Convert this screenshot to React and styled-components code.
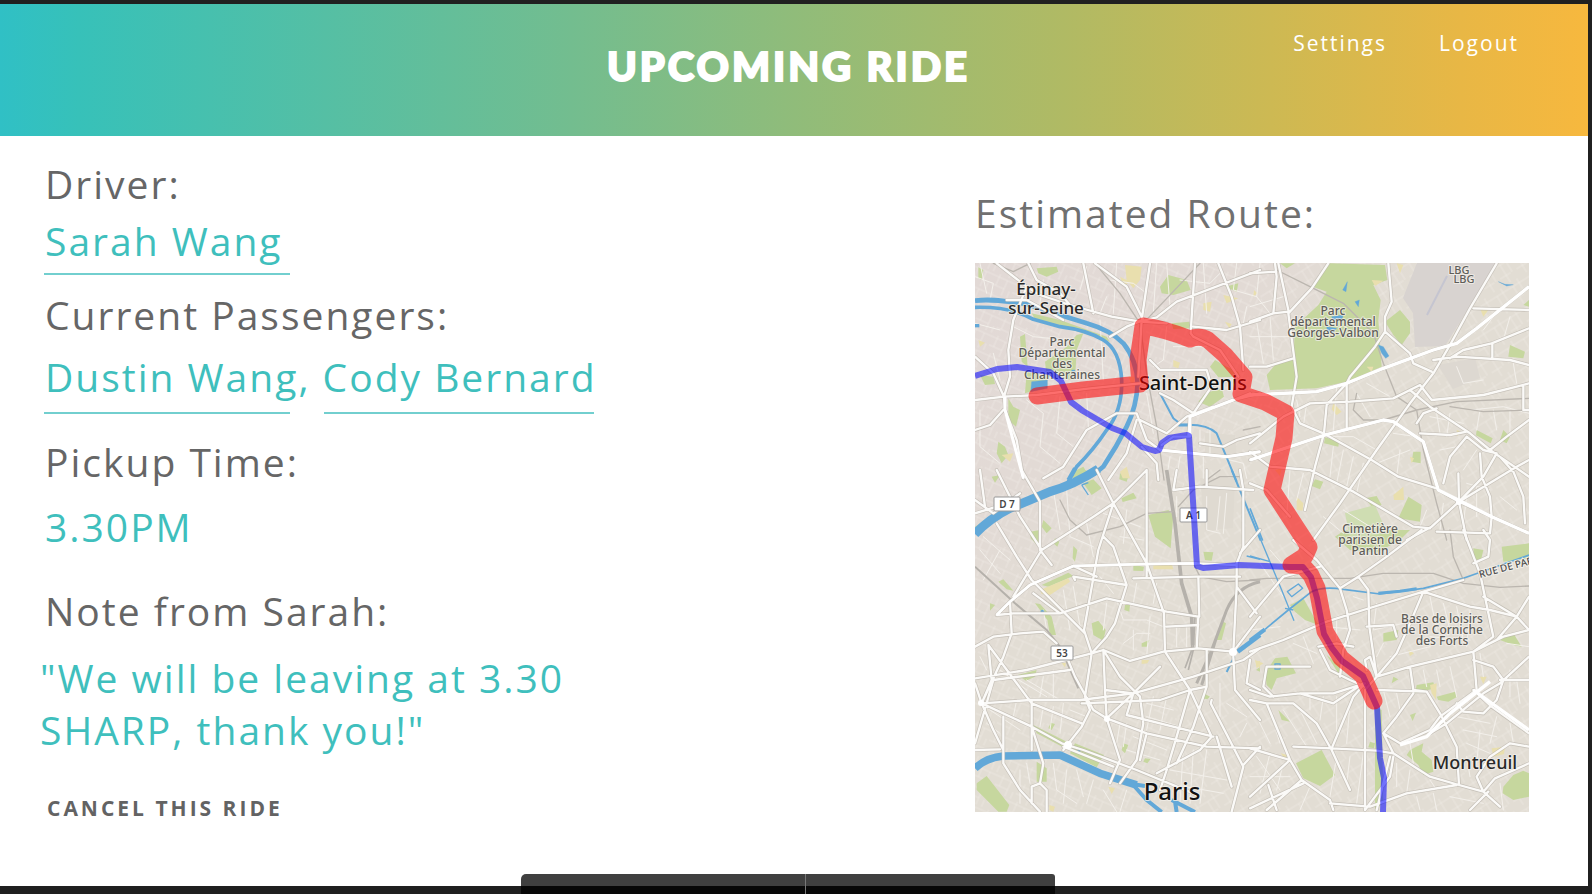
import React from "react";
import styled, { createGlobalStyle } from "styled-components";

const GlobalStyle = createGlobalStyle`
  *, *::before, *::after { box-sizing: border-box; }
  body { margin: 0; background: #222; font-family: "Open Sans", "Noto Sans", sans-serif; }
  h1, h2, p, blockquote { margin: 0; font-weight: 400; }
`;

const Frame = styled.div`
  position: relative;
  display: flex;
  flex-direction: column;
  min-height: 100vh;
  padding: 4px 4px 8px 0;
  background: #202020;
`;

const Header = styled.header`
  display: grid;
  grid-template-columns: 1fr auto 1fr;
  min-height: 132px;
  padding: 0 69px 0 58px;
  background: linear-gradient(
    90deg,
    #30c0c5 0%,
    #37c1b9 5%,
    #73bd8f 36%,
    #90bc7a 50%,
    #b0ba64 67%,
    #cdb953 80%,
    #e8b745 92%,
    #f7b83e 100%
  );
  color: #fff;
`;

const Title = styled.h1`
  grid-column: 2;
  align-self: center;
  padding-bottom: 8px;
  font: 900 40px/48px Lato, "Open Sans", sans-serif;
  letter-spacing: 3px;
  -webkit-text-stroke: 2px #fff;
  stroke-linejoin: round;
`;

const Nav = styled.nav`
  display: flex;
  justify-content: flex-end;
  gap: 52px;
  padding-top: 24px;
`;

const NavLink = styled.a`
  color: #fff;
  font-size: 21px;
  line-height: 30px;
  letter-spacing: 2px;
  text-decoration: none;
`;

const Main = styled.main`
  flex: 1;
  display: flex;
  justify-content: space-between;
  align-items: flex-start;
  padding: 22px 59px 32px 40px;
  background: #fff;
`;

const Details = styled.div`
  display: flex;
  flex-direction: column;
  align-items: flex-start;
  max-width: 600px;
`;

const Field = styled.section`
  display: flex;
  flex-direction: column;
  gap: ${(p) => p.$gap}px;
  margin-bottom: ${(p) => p.$after}px;
  padding-left: 5px;
`;

const Label = styled.h2`
  color: ${(p) => p.$color || "#666"};
  font-size: 39px;
  line-height: 52px;
  letter-spacing: 2px;
`;

const Value = styled.p`
  color: #3fbfbd;
  font-size: 39px;
  line-height: 52px;
  letter-spacing: 2px;
`;

const NameLink = styled.a`
  position: relative;
  color: inherit;
  text-decoration: none;

  &::after {
    content: "";
    position: absolute;
    left: ${(p) => p.$start || 0}px;
    right: ${(p) => p.$end || 0}px;
    bottom: ${(p) => -p.$drop}px;
    height: 2px;
    background: #72cfcf;
  }
`;

const Quote = styled.blockquote`
  margin-left: -5px;
  color: #3fbfbd;
  font-size: 39px;
  line-height: 52px;
  letter-spacing: 2px;
`;

const CancelButton = styled.button`
  padding: 0 0 0 7px;
  border: 0;
  background: none;
  color: #636363;
  font: 700 21px/30px "Open Sans", sans-serif;
  letter-spacing: 3px;
  cursor: pointer;
`;

const Route = styled.section`
  display: flex;
  flex-direction: column;
  gap: 24px;
  width: 35vw;
  max-width: 554px;
  padding-top: 29px;
`;

const MapImage = styled.svg`
  display: block;
  width: 100%;
  height: auto;
  font-family: "Noto Sans", "Open Sans", sans-serif;
`;

const Dock = styled.div`
  position: absolute;
  bottom: 0;
  left: 50%;
  display: grid;
  grid-template-columns: 285px 249px;
  height: 20px;
  margin-left: -275px;
  border-radius: 5px 3px 0 0;
  background: rgba(0, 0, 0, 0.75);
`;

const DockPane = styled.div`
  border-right: ${(p) => (p.$divided ? "1px solid #777" : "0")};
`;

/* The map is drawn in four sheets, each at three times the map's scale. */
const SHEETS = {
  nw: "translate(-15 -83) scale(0.33333)",
  ne: "translate(275 -13) scale(0.33333)",
  sw: "translate(-15 207) scale(0.33333)",
  se: "translate(275 267) scale(0.33333)",
};

const PARKS = {
  nw: "M230 265L290 260L295 275L260 290L235 280Z M215 400L300 420L440 470L450 485L380 462L300 440L225 418Z M350 465L370 460L350 510L345 600L260 590L255 545L320 500Z M200 575L262 590L262 620L195 640Z M180 470L195 462L203 560L185 545Z M600 320L625 285L680 300L692 330L640 345L605 340Z M635 430L688 425L692 445L640 447Z M750 560L765 540L800 560L835 575L840 590L775 592Z M735 640L785 625L792 650L750 680L715 665Z M145 655L160 680L180 690L168 740L145 720Z M60 585L100 590L105 612L75 615Z M115 785L135 800L145 825L125 850L110 820Z M330 880L370 860L385 885L350 900Z M55 262L70 270L65 300L55 295Z M795 320L835 310L830 335Z",
  ne: "M240 40L405 45L412 90L370 105L392 150L385 210L395 350L290 395L200 415L60 420L50 375L75 345L130 325L135 230L205 165L230 125L188 110Z M405 215L450 180L480 215L480 250L455 285L430 255Z M475 740L515 765L510 815L445 805Z M490 605L512 605L512 640L485 635Z M345 745L380 738L395 765L365 770Z M780 285L825 305L820 325L775 320Z M680 540L728 565L722 580L678 556Z M225 562L267 575L265 590L222 580Z M760 540L780 560L770 580L750 570Z M90 40L135 40L110 55Z M820 165L837 150L837 170Z M195 688L220 695L210 718L185 708Z",
  sw: "M565 135L625 120L640 135L632 235L585 200Z M370 40L400 28L425 55L395 75Z M480 10L505 20L500 35L478 28Z M484 85L520 68L530 85L488 96Z M210 185L240 180L240 235L212 205Z M250 150L275 175L260 190L245 170Z M285 205L298 215L292 230L280 220Z M340 228L352 240L345 275L338 265Z M330 20L375 0L390 5L350 28Z M730 245L760 247L755 272L735 270Z M520 285L552 290L550 303L520 302Z M245 345L325 308L340 318L265 350Z M115 335L130 328L160 362L140 358Z M225 400L240 402L275 440L288 495L270 495L262 450Z M395 460L415 452L437 480L430 512L400 495Z M173 615L230 600L225 620L198 632Z M495 405L510 405L508 425L493 420Z M545 520L568 510L560 530L545 530Z M790 455L798 460L785 510L768 510Z M735 672L750 680L742 688L725 684Z M220 765L320 815L315 835L230 790Z M272 758L285 762L275 780L265 775Z M345 820L432 855L410 892L330 850Z M230 875L260 895L260 935L230 935Z M50 940L80 918L148 1005L140 1025L115 1025L50 960Z M490 820L505 825L495 850L485 840Z M555 865L572 867L562 880L550 875Z M90 400L105 405L90 422Z M95 20L120 15L105 38Z M45 170L90 140L100 148L50 180Z M900 590L900 605L888 600Z",
  se: "M120 225L160 205L205 285L165 270L135 245Z M285 0L480 0L450 30L380 68L300 60L255 20Z M755 50L837 40L837 85L760 95Z M670 55L700 60L692 95L672 85Z M45 430L75 385L112 380L138 430L80 445L65 480L50 465Z M138 700L215 660L255 735L210 768L160 745Z M480 660L520 640L515 665L545 690L550 725L520 735L505 705L470 675Z M760 770L790 735L820 722L837 730L837 800L790 810L758 790Z M560 500L615 485L622 500L595 515L565 510Z M375 530L395 540L400 820L375 838Z M750 330L790 310L815 350L790 345Z M400 310L445 300L440 330L400 335Z M500 465L550 457L555 475L495 490Z M85 540L120 575L95 570Z M230 375L275 410L265 430Z M430 440L445 448L425 460Z M480 555L498 548L488 573Z M360 635L375 640L372 655L355 652Z",
};

const PATCHES = {
  nw: "M495 255L545 260L540 300L520 325L500 300Z M730 370L755 365L750 395L730 390Z M790 345L835 355L800 370Z M480 290L510 305L490 318Z M640 540L660 548L655 565L640 560Z M505 590L525 590L520 625Z M480 875L500 860L510 895L488 895Z M125 825L160 820L150 845Z M140 365L165 362L162 380Z M795 425L815 432L808 445Z M55 480L75 488L60 500Z",
  ne: "M440 40L460 45L450 70Z M365 90L400 92L375 108Z M250 460L275 485L260 495L245 478Z M430 735L460 710L462 750L432 750Z M140 740L160 760L158 782L140 780Z M350 350L370 350L365 365Z M690 175L715 180L700 200Z M75 660L95 655L90 678Z M12 120L22 130L10 140Z M620 540L635 545L622 558Z M480 620L492 625L485 640Z",
  sw: "M240 360L325 325L330 335L270 375L245 372Z M580 285L635 280L640 298L580 298Z M545 570L568 570L562 580L545 582Z M445 950L465 955L455 972Z M890 575L900 572L900 598Z M268 1005L285 1010L280 1025L268 1020Z M305 580L318 578L315 592Z",
  se: "M725 655L765 650L762 672L730 680Z M540 465L560 460L558 510L545 490Z M15 390L40 400L20 415Z M690 440L710 440L700 462Z M92 670L112 675L105 688Z M475 360L492 370L480 378Z",
};

const MAJOR = {
  nw: "M110 250L200 320L240 345L330 375L455 410L540 425L620 430 M205 250L230 300L300 340L330 375 M45 530L100 580L132 650L135 690L170 780L190 895 M200 320L160 420L145 510L150 590L132 650 M45 660L132 650L230 645L390 625L540 610 M570 250L545 420L535 590 M705 250L692 460L700 470L780 510L835 590 M775 250L815 350L840 440L850 570 M540 425L590 412L650 365L900 270 M570 540L600 570L740 570L755 620L700 700L640 660L600 640 M450 470L500 440L545 422 M690 710L740 690L820 660L900 640 M690 710L685 765 M600 810L700 820L800 830L900 815 M690 720L690 770L640 770L605 795 M820 660L870 640 M530 700L560 780L600 810 M530 700L470 700L380 750L310 860L250 895 M370 250L400 400 M405 250L500 320L550 420 M700 440L800 450L900 420 M310 420L200 360L140 360 M900 760L830 780L790 800L720 790 M45 750L90 735L130 690 M540 720L620 760L680 710L760 680 M545 800L590 850L595 900 M445 900L500 820L530 720",
  ne: "M0 630L120 590L225 555L400 510L430 515L520 575L540 640L565 720L627 755L725 800L837 850 M0 435L100 430L200 425L290 400L400 355L550 300L620 280L680 235L837 110 M740 40L660 175L600 285L550 370L480 460L380 600L270 760L190 870 M415 40L425 155L405 200L405 245L375 290L300 380L290 400L230 465L222 550L195 650L165 780 M405 245L480 310L490 340L545 365 M235 40L185 115L115 190L140 380L125 470L150 520L220 550L365 630L445 680L560 715 M75 40L80 80L70 190 M0 215L70 190L115 185 M85 40L115 180 M0 70L75 65 M0 580L100 500L180 460L300 455L430 445L480 420L510 405L545 450L700 435L800 410L837 400 M290 400L290 540 M670 175L837 180 M550 330L620 320L780 330L837 345 M600 325L640 300L725 280L837 235 M727 280L727 325 M480 420L540 470L660 550L720 600L837 680 M510 550L600 555L650 545 M580 700L600 620L650 560 M690 610L695 680L720 740L725 800 M0 605L60 650L180 660L310 725L490 830L540 835 M720 600L770 560L837 510 M627 755L700 680L740 610L700 600L650 560 M625 670L627 755 M627 755L650 870 M627 755L545 830L470 870 M500 520L520 490L560 475 M725 800L720 850L560 845 M750 620L790 665L820 740L825 820 M820 410L820 480L837 480 M627 755L800 650L837 630 M0 350L50 350L130 325 M0 700L50 720L120 800",
  sw: "M110 435L150 395L210 345L340 288L560 282L710 280L830 285 M45 530L100 500L180 490L250 485L290 520 M45 625L200 600L395 550L430 540L510 573L610 545L715 535L820 545 M395 550L440 500L465 460L500 345L460 230L430 200 M395 550L372 480L390 380L415 240L460 100L560 0 M410 0L460 100L560 280L612 430L615 545 M245 240L180 140L110 0 M110 160L170 260L215 330L375 490 M240 95L240 240L275 285 M160 380L245 240L400 140L460 100 M560 0L560 320 M65 700L45 640 M65 700L130 560L155 490L150 395 M65 700L215 770L305 820L370 840L530 900L700 970 M65 700L100 780L130 840L130 880 M65 700L210 690L360 690L520 670L700 620L850 570L900 535 M85 525L95 630L65 700 M85 525L215 700L365 760 M215 690L215 840 M130 740L130 840 M45 840L120 838 M130 880L180 960L240 1025 M300 430L160 430L110 435 M300 430L440 385L620 425L715 440 M715 440L710 535 M520 325L710 320L840 320 M500 345L340 320L345 330 M620 470L715 465 M395 550L375 680L390 720L365 770L310 840 M430 540L435 660L440 745L480 870L450 940 M440 745L400 720L345 620L320 560 M440 745L520 670L600 590 M440 745L560 790L740 830L900 835 M520 670L500 735L600 760L760 800 M430 540L480 620L540 680L550 760L530 870L480 940 M615 545L690 660L755 800 M690 660L740 650L740 540 M690 660L650 800L620 900L600 960 M740 650L700 770L650 880 M820 560L825 660L900 750 M755 690L752 700L850 890L815 1025 M755 800L720 840L590 910 M850 885L900 830 M770 800L815 950 M820 545L830 350L830 280L850 230L850 60L840 0 M830 350L890 430 M820 545L900 440 M640 60L720 50L880 60 M650 0L640 60 M740 0L740 50 M900 180L840 250 M715 320L718 440 M45 130L110 110 M45 820L100 630L330 600 M215 770L250 880L240 940L260 960L260 1025 M215 1000L215 950L240 940 M310 830L460 890 M690 660L600 690L365 700 M560 790L540 870 M870 570L860 640L900 660 M220 370L300 430 M435 660L520 670 M45 90L100 130L180 70 M60 0L75 110 M185 0L240 95 M340 288L410 320",
  se: "M0 365L100 330L230 275L340 240L520 185L640 150 M515 0L410 80L325 140L270 175L200 90L130 30 M270 175L290 240L300 300L280 360L270 440 M325 140L355 180L358 290L380 440 M520 185L480 280L440 370L380 440L345 480L345 840 M640 0L690 130L730 320L670 365L480 410L380 440 M670 365L680 480L570 560L540 600L450 640L400 610 M670 365L760 320L837 300 M480 410L490 480L530 485L570 550L620 650L627 765 M670 480L725 530L837 610 M540 610L590 580L700 490L750 460L837 380 M670 390L730 410L760 450L740 510L700 550L640 545L620 520 M750 450L837 450 M380 480L530 485 M0 480L60 500L150 490L250 490L345 460 M0 510L50 520L120 690L155 750L240 810L250 840 M50 520L130 520L200 580L245 660L300 780 M0 655L120 690 M245 655L380 662L430 670L540 740L627 765L700 785L750 830 M245 655L310 500L345 460 M120 690L0 800 M130 650L245 655 M0 835L160 760 M155 750L50 840 M55 765L80 840 M240 820L360 830L470 790L620 765 M420 680L380 840 M700 785L735 745L837 700 M700 785L680 740L720 680L780 640L837 650 M660 840L715 785 M345 840L420 740L430 680 M490 490L440 560L400 610 M400 610L430 670 M700 200L800 260L837 300 M520 185L660 230L720 240 M720 240L800 260L837 200 M210 360L240 420L300 450L345 470 M205 350L260 340L310 350 M800 260L740 330 M180 410L50 410L40 470L70 500 M350 290L430 285L440 320 M0 260L100 140L210 110 M700 0L720 30L715 80L670 100 M380 440L360 380L345 390L350 420 M150 490L250 520L340 460",
};

const MINOR = {
  nw: "M45 290L100 310L90 360 M60 250L80 340 M45 430L120 450 M100 520L120 600 M160 440L220 470L320 480 M250 300L240 370 M300 340L290 400 M60 690L60 800L120 850 M200 660L250 700L240 800L300 850 M300 650L290 760L340 800 M380 640L385 740 M420 420L430 600 M450 300L520 310L560 340 M590 250L580 400 M620 250L630 380 M660 300L750 310L780 280 M730 250L740 400 M620 440L610 540L580 560 M640 500L740 500 M660 570L660 640 M830 250L820 330L890 350 M860 380L850 430 M560 640L580 760 M720 750L720 800 M750 740L750 820 M630 830L620 895 M660 830L650 895 M730 830L730 895 M770 830L850 850L860 895 M380 260L360 330 M440 350L420 400 M470 250L460 400",
  ne: "M30 40L20 140L60 190 M0 170L100 140 M0 260L120 260 M20 215L40 340 M60 200L70 330 M140 450L150 500 M170 460L160 530 M260 410L250 540 M320 430L360 500 M350 400L420 440 M380 600L310 560L230 560 M250 590L240 680 M280 600L260 700 M310 620L290 710 M340 640L320 730 M540 500L640 520 M560 490L570 550 M600 490L590 560 M570 600L620 590 M680 600L640 660 M660 480L760 470L837 490 M690 480L680 540 M730 480L740 540 M780 480L780 560 M430 550L500 560 M450 600L440 680 M380 640L480 600 M650 700L720 720 M650 740L640 820 M680 700L680 800 M750 740L800 780 M580 760L570 840 M530 780L510 830 M780 200L760 270 M730 200L700 240 M790 340L800 400 M620 350L640 400L700 390 M280 780L360 830 M220 800L280 850 M120 660L110 800 M160 670L140 750",
  sw: "M280 60L300 180 M320 60L330 200L400 230 M380 160L400 260 M430 130L540 170 M480 200L550 210 M500 120L490 220 M650 80L650 140 M740 80L740 180L780 190 M780 80L770 180 M800 70L790 190 M70 200L150 270 M60 240L120 310 M120 240L70 330 M250 420L260 480 M310 360L330 480 M340 350L360 470 M420 320L460 370 M440 400L430 480 M470 390L490 450L560 450L610 470 M490 520L530 490L570 490 M520 480L520 540 M570 440L560 560 M590 340L580 400 M530 340L520 400 M650 470L650 530 M680 470L680 530 M60 560L80 600 M120 600L200 660 M160 620L260 680 M200 630L300 690 M250 620L240 680 M280 600L280 690 M90 720L180 780 M80 760L120 790 M170 690L160 740 M250 710L240 770 M280 710L270 780 M310 700L300 790 M330 720L380 740 M560 700L640 720 M560 740L660 770 M580 680L560 780 M620 680L600 780 M480 760L470 820 M500 760L490 830 M520 800L620 840 M500 840L600 870 M670 830L660 1000 M700 840L690 1000 M740 840L720 1000 M630 900L800 930 M620 940L790 970 M780 640L780 740 M800 700L860 740 M860 760L840 800 M180 900L180 1000 M200 880L210 940 M280 880L290 960L350 1000 M320 900L310 1000 M350 900L370 980 M400 930L380 1000 M430 960L470 1025 M500 960L480 1025",
  se: "M0 300L90 290 M30 100L100 200 M60 60L130 140 M130 340L200 370 M160 320L190 400 M230 290L330 300 M260 260L260 330 M310 200L340 210 M380 220L370 300L460 280 M400 340L380 380 M420 380L540 350 M540 200L560 300 M580 220L600 300 M620 230L640 330 M660 240L650 350 M540 320L660 330 M690 370L700 440 M770 340L837 350 M780 420L780 500 M800 450L810 520 M600 410L620 500 M560 420L570 470 M520 420L530 470 M400 480L420 560 M440 490L450 540 M60 540L90 640 M20 560L60 640 M100 540L170 650 M150 540L200 640 M180 500L180 540 M220 500L210 570 M260 500L260 620 M300 520L290 640 M20 680L90 780 M60 670L30 790 M100 700L80 780 M0 740L120 740 M180 770L150 840 M260 680L240 800 M300 680L290 760 M340 670L320 820 M440 700L440 770 M480 720L470 790 M540 750L560 780 M560 700L640 710 M650 680L660 740 M690 600L680 700 M740 560L720 640 M780 580L790 640 M620 560L720 580 M640 600L740 620 M650 640L720 670 M480 640L490 700 M600 800L700 820 M500 800L510 840 M550 790L560 840 M750 760L760 840",
};

const RAILS = {
  nw: "M405 250L480 340L540 430L560 580L590 740L612 900 M100 250L160 275L210 250 M540 440L720 250 M850 750L900 740",
  ne: "M80 60L180 110L280 160L370 250L400 340L440 440L500 480L520 600L560 760L590 870 M320 430L310 480L340 510L400 510L500 480L620 455L837 445 M600 470L700 485L837 480",
  sw: "M300 90L330 150L380 195L480 170L560 130L640 125 M840 20L780 20L700 60L655 110 M700 280L720 320L800 335L900 330 M780 0L740 30",
  se: "M0 150L50 145L300 145L400 130L550 130L640 160L750 172L837 168 M600 0L610 80L640 150",
};

function Layer({ data, ...stroke }) {
  return (
    <g fill="none" strokeLinejoin="round" strokeLinecap="round" {...stroke}>
      {Object.keys(data).map((key) => (
        <path key={key} transform={SHEETS[key]} d={data[key]} />
      ))}
    </g>
  );
}

function MapText({ x, y, lines, size, leading, weight = 500, fill = "#5e5d59" }) {
  return (
    <text
      textAnchor="middle"
      fontSize={size}
      fontWeight={weight}
      fill={fill}
      stroke="#f3f0ea"
      strokeOpacity="0.8"
      strokeWidth="2"
      strokeLinejoin="round"
      paintOrder="stroke"
    >
      {lines.map((line, i) => (
        <tspan key={line + i} x={x} y={y + i * leading}>
          {line}
        </tspan>
      ))}
    </text>
  );
}

function Shield({ x, y, width, text }) {
  return (
    <g>
      <rect x={x} y={y} width={width} height="14" rx="1" fill="#fff" stroke="#999" />
      <text x={x + width / 2} y={y + 11} textAnchor="middle" fontSize="10" fontWeight="600" fill="#444">
        {text}
      </text>
    </g>
  );
}

function RouteMap() {
  return (
    <MapImage viewBox="0 0 554 549" role="img" aria-label="Estimated route from Saint-Denis to Montreuil">
      <defs>
        <pattern id="blocks-a" width="23" height="19" patternUnits="userSpaceOnUse" patternTransform="rotate(24)">
          <path d="M0 3H23M0 12H14M5 0V12M14 3V19M20 12V19" fill="none" stroke="#f2eee9" strokeWidth="0.7" strokeOpacity="0.6" />
        </pattern>
        <pattern id="blocks-b" width="19" height="25" patternUnits="userSpaceOnUse" patternTransform="rotate(-32)">
          <path d="M0 5H19M7 5V25M0 17H12M14 0V17" fill="none" stroke="#f2eee9" strokeWidth="0.7" strokeOpacity="0.6" />
        </pattern>
        <linearGradient id="land" x1="0" y1="0" x2="0.6" y2="0.65">
          <stop offset="0" stopColor="#e2d9d6" />
          <stop offset="0.4" stopColor="#e2dad5" />
          <stop offset="0.65" stopColor="#e2ddd4" />
        </linearGradient>
      </defs>
      <rect width="554" height="549" fill="url(#land)" />
      <path d="M0 0H270L330 130L210 190L200 549H0Z" fill="url(#blocks-a)" />
      <path d="M270 0H554V549H200L210 190L330 130Z" fill="url(#blocks-b)" />

      <Layer data={PARKS} fill="#c6d79e" />
      <Layer data={PATCHES} fill="#e9dfae" />
      <path d="M442 0H522L470 83L440 84L438 50L428 35L436 15Z" fill="#d8d3d0" />
      <path d="M452 52L472 13" stroke="#c5c5d0" strokeWidth="2" />
      <path d="M463 102L500 95L505 115L478 126Z" fill="#ddd8d1" />
      <path d="M230 170L260 172L262 195L230 190Z M225 215L260 215L258 265L230 268Z" fill="#dfdad1" />
      <path d="M370 250L400 242L412 270L375 276Z" fill="#cfddb2" />

      <Layer data={MINOR} stroke="#f3f0eb" strokeWidth="3" />

      <g transform={SHEETS.sw} fill="none" stroke="#b5b1ab" strokeLinecap="butt">
        <path d="M620 0L645 160L665 340L695 440L698 525" strokeWidth="11" />
        <path d="M695 440L695 540L675 595 M705 440L700 540L685 600" strokeWidth="5" />
        <path d="M45 290L165 400L260 480L300 530L355 655" strokeWidth="6" />
        <path d="M900 335Q830 350 800 420L755 540L710 640 M770 500L725 645" strokeWidth="9" />
      </g>
      <Layer data={RAILS} stroke="#bbb6af" strokeWidth="4" />

      <g fill="none" stroke="#62a8d8" strokeLinejoin="round">
        <g transform={SHEETS.nw}>
          <path d="M45 362C100 355 140 365 200 372L300 405L380 430Q450 450 490 490Q530 540 533 610Q530 680 500 740Q470 800 430 860Q400 890 330 908" strokeWidth="14" />
          <path d="M45 382C120 380 180 395 220 418L300 440Q380 450 430 480Q480 510 485 600Q488 690 440 750Q400 810 350 860L325 905" strokeWidth="11" />
          <path d="M45 437H58" strokeWidth="10" />
          <path d="M600 640L640 715L665 735Q740 730 770 760L830 905" strokeWidth="6" />
          <path d="M655 735H690" strokeWidth="9" />
          <path d="M215 605L262 600L262 625L212 635Z M335 570L345 570L340 590Z" fill="#62a8d8" strokeWidth="1" />
        </g>
        <g transform={SHEETS.ne}>
          <path d="M385 285L400 290L417 318L407 325L395 310Z M292 95L288 125L278 120Z M315 155L328 150L325 170Z M245 200L280 195L275 210L250 212Z M230 230L260 235L248 250L232 245Z M745 95L765 103L790 104L770 108Z" fill="#62a8d8" strokeWidth="1" />
          <path d="M0 775L38 872" strokeWidth="5" />
        </g>
        <g transform={SHEETS.sw}>
          <path d="M415 -3Q340 45 270 65L150 115Q90 145 45 192" strokeWidth="27" />
          <path d="M345 -5L325 30" strokeWidth="12" />
          <path d="M365 45L385 75 M365 45L385 38" strokeWidth="4" />
          <path d="M45 895Q80 862 130 858L300 855L420 910L530 945" strokeWidth="23" />
          <path d="M500 940L555 948 M520 945L560 990L605 1026 M635 990L705 1026 M645 995L650 1026" strokeWidth="12" />
          <path d="M815 0L902 212" strokeWidth="6" />
          <path d="M900 495L833 545" strokeWidth="14" />
          <path d="M823 560L800 606" strokeWidth="6" />
          <path d="M860 258L900 268" strokeWidth="4" />
          <circle cx="247" cy="425" r="5" fill="#62a8d8" strokeWidth="1" />
          <circle cx="357" cy="842" r="4" fill="#62a8d8" strokeWidth="1" />
        </g>
        <g transform={SHEETS.se}>
          <path d="M20 0L95 180L132 272 M0 78L60 95" strokeWidth="4" />
          <path d="M0 332L45 298" strokeWidth="12" />
          <path d="M45 298L115 240L185 185Q220 168 280 178L390 192L520 175L640 145L837 75" strokeWidth="5" />
          <path d="M385 190L450 184L500 176" strokeWidth="9" />
          <path d="M112 185L145 162L158 175L125 200Z M105 235L130 240" strokeWidth="4" />
          <path d="M75 402H90V417H75Z" strokeWidth="5" />
        </g>
      </g>

      <Layer data={MAJOR} stroke="#bbb6ae" strokeWidth="11" strokeOpacity="0.75" />
      <Layer data={MAJOR} stroke="#fbfaf8" strokeWidth="7" />
      <g fill="none" stroke="#fff" strokeLinejoin="round">
        <path transform={SHEETS.ne} d="M0 435L100 430L200 425L290 400L400 355L550 300L620 280L680 235L837 110 M0 630L225 555L400 510L430 515L520 575L565 720L725 800L837 850" strokeWidth="10" />
        <path transform={SHEETS.sw} d="M110 435L150 395L210 345L340 288L560 282L710 280" strokeWidth="8" />
        <path transform={SHEETS.se} d="M450 645L530 620L600 550L720 455 M670 480L837 600" strokeWidth="10" />
        <path transform={SHEETS.nw} d="M135 650V690L190 895 M690 770V710L820 660 M600 810L800 830L900 815" strokeWidth="9" />
      </g>
      <g fill="#fff">
        <circle cx="6" cy="440" r="3" />
        <circle cx="132" cy="456" r="3" />
        <circle cx="258" cy="389" r="4" />
        <circle cx="93" cy="482" r="4" />
        <circle cx="484" cy="239" r="3" />
      </g>

      <MapText x={71} y={32} size={17} leading={19} fill="#292929" lines={["Épinay-", "sur-Seine"]} />
      <MapText x={87} y={83} size={12} leading={11} lines={["Parc", "Départemental", "des", "Chanteraines"]} />
      <MapText x={358} y={52} size={12} leading={11} lines={["Parc", "départemental", "Georges-Valbon"]} />
      <MapText x={484} y={11} size={11} leading={9} lines={["LBG"]} />
      <MapText x={489} y={20} size={11} leading={9} lines={["LBG"]} />
      <MapText x={395} y={270} size={12} leading={11} lines={["Cimetière", "parisien de", "Pantin"]} />
      <MapText x={467} y={360} size={12} leading={11} lines={["Base de loisirs", "de la Corniche", "des Forts"]} />
      <MapText x={218} y={127} size={20} leading={20} fill="#111" lines={["Saint-Denis"]} />
      <MapText x={197} y={537} size={24} leading={24} fill="#111" lines={["Paris"]} />
      <MapText x={500} y={506} size={18} leading={18} fill="#292929" lines={["Montreuil"]} />
      <text x="505" y="315" transform="rotate(-15 505 315)" fontSize="10" fontWeight="500" fill="#4e4e4e" stroke="#f3f0ea" strokeWidth="2" paintOrder="stroke">
        RUE DE PARIS
      </text>
      <Shield x={19} y={234} width={26} text="D 7" />
      <Shield x={205} y={245} width={27} text="A 1" />
      <Shield x={76} y={383} width={22} text="53" />

      <path
        d="M0 113L22 106L42 104L75 109L86 118L96 139L108 148L137 165L150 170L167 184L180 188L184 187L187 180L194 175L212 172L214 173L222 303L228 305L264 302L315 304L328 304L336 314L342 335L349 371L357 385L367 398L388 413L402 444L405 495L409 515L408 549"
        fill="none"
        stroke="#0000ff"
        strokeOpacity="0.55"
        strokeWidth="6"
        strokeLinejoin="round"
      />
      <path
        d="M62 133L108 127L165 121L163 97L168 63Q190 66 215 76Q225 72 233 77L250 92L269 114L266 131L290 139L311 150L309 175L297 227L334 284L330 293L316 302L328 303L336 312L342 325L350 368L366 395L388 413L399 438"
        fill="none"
        stroke="#ff0000"
        strokeOpacity="0.56"
        strokeWidth="17"
        strokeLinejoin="round"
        strokeLinecap="round"
      />
    </MapImage>
  );
}

export default function App() {
  return (
    <>
      <GlobalStyle />
      <Frame>
        <Header>
          <Title>UPCOMING RIDE</Title>
          <Nav>
            <NavLink href="#settings">Settings</NavLink>
            <NavLink href="#logout">Logout</NavLink>
          </Nav>
        </Header>
        <Main>
          <Details>
            <Field $gap={5} $after={22}>
              <Label>Driver:</Label>
              <Value>
                <NameLink href="#sarah-wang" $drop={8} $start={-1} $end={-7}>Sarah Wang</NameLink>
              </Value>
            </Field>
            <Field $gap={10} $after={33}>
              <Label>Current Passengers:</Label>
              <Value>
                <NameLink href="#dustin-wang" $drop={11} $start={-1} $end={8}>Dustin Wang</NameLink>
                {", "}
                <NameLink href="#cody-bernard" $drop={11} $start={1} $end={3}>Cody Bernard</NameLink>
              </Value>
            </Field>
            <Field $gap={13} $after={32}>
              <Label>Pickup Time:</Label>
              <Value>3.30PM</Value>
            </Field>
            <Field $gap={15} $after={37}>
              <Label>Note from Sarah:</Label>
              <Quote>
                "We will be leaving at 3.30
                <br />
                SHARP, thank you!"
              </Quote>
            </Field>
            <CancelButton type="button">CANCEL THIS RIDE</CancelButton>
          </Details>
          <Route>
            <Label $color="#707070">Estimated Route:</Label>
            <RouteMap />
          </Route>
        </Main>
        <Dock>
          <DockPane $divided />
          <DockPane />
        </Dock>
      </Frame>
    </>
  );
}
